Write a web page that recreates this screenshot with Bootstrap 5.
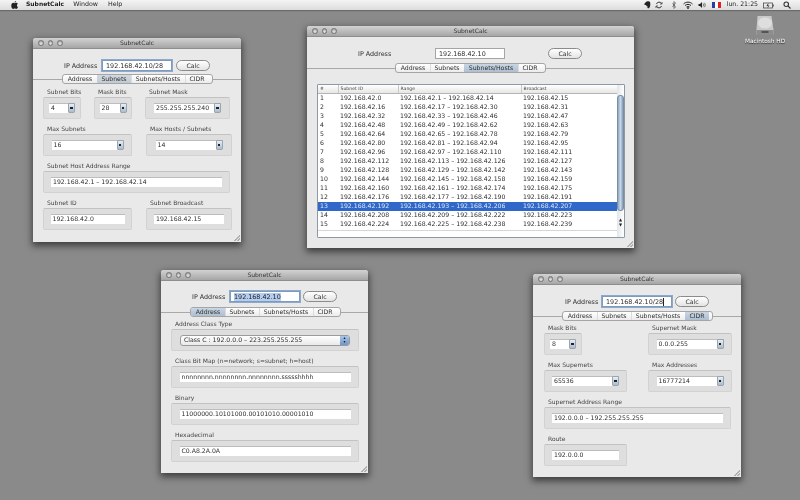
<!doctype html>
<html><head><meta charset="utf-8">
<link href="https://cdn.jsdelivr.net/npm/bootstrap@5.3.0/dist/css/bootstrap.min.css" rel="stylesheet">
<style>
html,body{margin:0;width:800px;height:500px;overflow:hidden;background:#8a8a8a}
.desk{position:relative;width:800px;height:500px;background:#8a8a8a;font-family:"DejaVu Sans",sans-serif;font-size:6.2px;line-height:8px;color:#2e2e2e;text-rendering:geometricPrecision;filter:blur(.3px);overflow:hidden}
.menubar{height:10px;background:linear-gradient(#f4f4f4,#dcdcdc);box-shadow:0 1px 1px #6a6a6a;padding:0 9px 0 11px;font-size:6.3px;line-height:10px;color:#222}
.menubar b{font-size:6px;font-weight:700}
.ml4{margin-left:4px}.ml5{margin-left:5px}.ml6{margin-left:6px}.ml7{margin-left:7px}.ml8{margin-left:8px}.ml9{margin-left:9px}.ml10{margin-left:10px}
.win{position:absolute;background:#e9e9e9;border-radius:3px 3px 0 0;box-shadow:0 3px 7px 1px rgba(0,0,0,.55)}
.w1{left:33px;top:38px;width:208px;height:204px}
.w2{left:307px;top:26px;width:327px;height:222px}
.w3{left:161px;top:270px;width:207px;height:203px}
.w4{left:533px;top:274px;width:208px;height:203px}
.title{height:11px;background:linear-gradient(#d2d2d2,#a6a6a6);border-radius:3px 3px 0 0;border-bottom:1px solid #8e8e8e;line-height:11px;font-size:6px;color:#333;padding:0 5px}
.lights{gap:4px;width:26px}
.lights i{width:5.5px;height:5.5px;border-radius:50%;background:radial-gradient(circle at 50% 70%,#ececec,#8c8c8c);border:.5px solid #777;display:block}
.title span{flex:1;text-align:center;padding-right:26px}
.ip{height:11px;font-size:6.4px}
.ip .lab{width:32px;white-space:nowrap}
.w1 .ip{margin:11px 0 3px 31px;gap:6px}.w1 .calc{margin-left:-2px}
.w2 .ip{margin:11px 0 4px 51px;gap:45px}.w2 .calc{margin-left:-2px}
.w3 .ip{margin:10px 0 5px 31px;gap:6px}.w3 .calc{margin-left:-3px}
.w4 .ip{margin:11px 0 4px 32px;gap:5px}.w4 .calc{margin-left:-2px}
.ipf.form-control{width:70px;height:11px;min-height:0;border-radius:0;padding:0 3px;font-size:6.4px;line-height:10px;color:#2e2e2e;border:1px solid #a5a5a5;background:#fff;white-space:nowrap}
.ipf.focus{box-shadow:0 0 0 1px #8fa9c9;border-color:#7f9ac0}
.ipf mark{background:#b5cdf0;padding:0;color:#222}
.caret{border-right:.6px solid #222}
.calc.btn{width:34px;height:11px;padding:0;font-size:6.2px;line-height:9px;border-radius:6px;color:#333;background:linear-gradient(#fff,#e4e4e4);border:1px solid #8b8b8b}
.tabs{height:10px;background:linear-gradient(#a8a8a8,#a8a8a8) 0 5px/100% 1px no-repeat}
.w1 .tabs{padding-left:29px}.w2 .tabs{padding-left:88px}.w3 .tabs{padding-left:29px}.w4 .tabs{padding-left:29px}
.btn-group.seg{width:151px;height:10px;background:linear-gradient(#fff,#ececec);border:1px solid #a5a5a5;border-radius:3px;overflow:hidden}
.seg .btn{flex:none;padding:0;height:8px;font-size:6.2px;line-height:8px;border:0;border-radius:0;color:#2e2e2e;background:transparent;border-right:1px solid #dcdcdc;white-space:nowrap}
.seg .t1{width:35px}.seg .t2{width:35px}.seg .t3{width:55px}.seg .t4{width:24px;border-right:0}
.seg .btn.on{background:linear-gradient(#c9d6e3,#aebfd0)}
.w1 .seg .btn.on{background:linear-gradient(#d2d9e0,#c0cad4)}
.groups{gap:7px;margin-top:5px}
.w1 .groups,.w3 .groups{padding-left:10px}
.w4 .groups{padding-left:11px}
.w3 .groups,.w4 .groups{margin-top:4px}
.grp .lb{height:8px;line-height:8px;padding-left:4px;font-size:6px;color:#444;white-space:nowrap}
.box{height:22px;background:#dedede;border:1px solid #d2d2d2;border-top-color:#c2c2c2;border-radius:2px;display:flex;align-items:center;justify-content:center}
.g38{width:38px}.g83{width:83px}.g84{width:84px}.g85{width:85px}.g86{width:86px}.g89{width:89px}.g187{width:187px}.g188{width:188px}
.gap13{gap:13px}.gap14{gap:14px}.gap21{gap:21px}.gap66{gap:66px}
.fld{height:10px;background:#fff;border-top:1px solid #bdbdbd;font-size:6.2px;line-height:9px;padding-left:2px;color:#2e2e2e;white-space:nowrap}
.f26{width:26px}.f27{width:27px}.f67{width:67px}.f72{width:72px}.f74{width:74px}.f70{width:70px}.f171{width:171px}
.fld .arr{width:7px;height:10px;margin-left:auto;margin-top:-1px;background:linear-gradient(#e9eef4,#a8bcd0);border:.5px solid #9aa5b0;border-radius:1px;display:flex;align-items:center;justify-content:center}
.arr::after{content:"";width:2.5px;height:2.5px;background:#222}
.pop{width:170px;height:11px;border:1px solid #9b9b9b;border-radius:3px;background:linear-gradient(#fff,#e9e9e9);padding-left:3px;line-height:9px;font-size:6.2px;white-space:nowrap}
.pop .arr2{width:9px;height:9px;margin-left:auto;background:linear-gradient(#a9c4e4,#6f97c9);border-radius:0 2px 2px 0;color:#123;font-size:4px;line-height:4.5px;text-align:center}
.frame{width:308px;height:154px;margin:11px 0 0 10px;border:1px solid #8d9aa5;border-radius:1px;background:#fff}
.clip{height:146px;overflow:hidden;border-bottom:1px solid #d6d6d6}
.grid.table{width:301px;margin:0;table-layout:fixed;font-size:6.2px;line-height:9px;--bs-table-bg:transparent;color:#2e2e2e}
.grid th,.grid td{padding:0 0 0 2px;height:9px;border:0;white-space:nowrap;font-weight:400;color:#2e2e2e;box-shadow:none}
.grid th{height:8px;line-height:7px;font-size:4.6px;background:linear-gradient(#fff,#e6e6e6);border-right:1px solid #c8c8c8;border-bottom:1px solid #b5b5b5;color:#444}
.grid tr.sel td{background:#2f68c8;color:#dfe9f8;--bs-table-accent-bg:transparent}
.c1{width:20px}.c2{width:60px}.c3{width:123px}
.sb{width:7px;background:linear-gradient(90deg,#e2e6ea,#fff)}
.thumb{height:116px;margin-top:10px;background:linear-gradient(90deg,#8ea6bf,#c9d7e5 50%,#7f9ab8);border-radius:3px;border:.5px solid #7a8ea3}
.arrows{font-size:4px;line-height:5px;text-align:center;color:#222;margin-top:6px}
.grip{position:absolute;right:1px;bottom:1px;width:7px;height:7px;background:linear-gradient(135deg,transparent 55%,#b0b0b0 55%,#b0b0b0 65%,transparent 65%,transparent 78%,#b0b0b0 78%,#b0b0b0 88%,transparent 88%)}
.right{color:#222;font-size:6.2px}
.hd{position:absolute;left:742px;top:15px;width:46px;text-align:center;color:#fff;font-size:5.8px;line-height:7px;text-shadow:0 1px 1px #222}
.hd svg{display:block;margin:0 auto 3px}
</style></head><body>
<div class="desk">
<div class="menubar d-flex align-items-center">
<svg width="7" height="8" viewBox="0 0 14 16" class="me-2"><path d="M10 0c0 2-1.500 3.500-3 3.500C7 1.800 8.500.3 10 0zM7 4.500c1 0 2-.9 3.500-.9 1.400 0 2.500.7 3.200 1.800-2.800 1.600-2.300 5.500.3 6.500-.8 2-2.300 4-3.700 4-1.200 0-1.500-.7-3-.7s-1.900.7-3 .7C2.500 15.900.5 12.500.5 9.500.5 6 2.600 3.700 4.600 3.700 5.600 3.700 6.300 4.500 7 4.500z" fill="#222"/></svg>
<b>SubnetCalc</b><span class="ml9">Window</span><span class="ml10">Help</span>
<div class="right ms-auto d-flex align-items-center">
<svg width="7" height="8" viewBox="0 0 14 16"><path d="M1 5l4-4h1c2-1 5-1 6 1 1 3 1 8-1 11-1 2-3 2-4 1-1-2 1-3 1-3-2 0-3-1-4-3H1z" fill="#222"/></svg>
<svg class="ml4" width="8" height="8" viewBox="0 0 16 16" fill="none" stroke="#333" stroke-width="2"><path d="M3 6a5.500 5.500 0 0 1 10-1M13 10a5.500 5.500 0 0 1-10 1"/><path d="M14 2v4h-4M2 14v-4h4" stroke-width="1.500"/></svg>
<svg class="ml9" width="4" height="8" viewBox="0 0 8 16" fill="none" stroke="#444" stroke-width="1.300"><path d="M1 4l6 8-3 3V1l3 3-6 8"/></svg>
<svg class="ml7" width="10" height="8" viewBox="0 0 20 16" fill="none" stroke="#222" stroke-width="2"><path d="M1 6c5-5 13-5 18 0M4 9c3.500-3 8.500-3 12 0M7 12c2-1.500 4-1.500 6 0"/><circle cx="10" cy="14" r="1" fill="#222"/></svg>
<svg class="ml5" width="8" height="8" viewBox="0 0 16 16"><path d="M1 6h3l4-4v12l-4-4H1z" fill="#222"/><path d="M10 5c1.500 1.500 1.500 4.500 0 6M12.500 3.500c2.500 2.500 2.500 6.500 0 9" fill="none" stroke="#333" stroke-width="1.300"/></svg>
<svg class="ml6" width="9" height="6" viewBox="0 0 9 6"><rect width="3" height="6" fill="#2a3f9a"/><rect x="3" width="3" height="6" fill="#fff"/><rect x="6" width="3" height="6" fill="#d22"/></svg>
<span class="text-nowrap ml6">lun. 21:25</span>
<svg class="ml5" width="11" height="7" viewBox="0 0 22 14"><rect x="1" y="2" width="18" height="10" fill="none" stroke="#444" stroke-width="1.500"/><rect x="19.500" y="5" width="2" height="4" fill="#444"/><path d="M10 3l-3 5h3l-1 4 4-5h-3l1-4z" fill="#333"/></svg>
<svg class="ml9" width="8" height="8" viewBox="0 0 16 16" fill="none" stroke="#333" stroke-width="2.200"><circle cx="6.500" cy="6.500" r="4.500"/><path d="M10 10l5 5"/></svg>
</div></div>

<div class="hd"><svg width="22" height="21" viewBox="0 0 21 21"><path d="M3 1h14l2 14v4a1 1 0 0 1-1 1H3a1 1 0 0 1-1-1v-4z" fill="#c9c9c9"/><path d="M2 15h17v4a1 1 0 0 1-1 1H3a1 1 0 0 1-1-1z" fill="#8d8d8d"/><ellipse cx="10.500" cy="8" rx="7" ry="5.500" fill="#dedede"/><rect x="7" y="16" width="7" height="2" fill="#555"/></svg>Macintosh HD</div>

<!-- window 1 -->
<div class="win w1">
<div class="title d-flex align-items-center"><div class="lights d-flex"><i></i><i></i><i></i></div><span>SubnetCalc</span></div>
<div class="ip d-flex align-items-center"><span class="lab">IP Address</span><div class="form-control ipf focus">192.168.42.10/28</div><button class="btn calc">Calc</button></div>
<div class="tabs"><div class="btn-group seg"><button class="btn t1">Address</button><button class="btn t2 on">Subnets</button><button class="btn t3">Subnets/Hosts</button><button class="btn t4">CIDR</button></div></div>
<div class="groups d-flex flex-column">
<div class="d-flex gap13"><div class="grp g38"><div class="lb">Subnet Bits</div><div class="box"><div class="fld f26 d-flex">4<span class="arr"></span></div></div></div>
<div class="grp g38"><div class="lb">Mask Bits</div><div class="box"><div class="fld f27 d-flex">28<span class="arr"></span></div></div></div>
<div class="grp g85"><div class="lb">Subnet Mask</div><div class="box"><div class="fld f67 d-flex">255.255.255.240<span class="arr"></span></div></div></div></div>
<div class="d-flex gap14"><div class="grp g89"><div class="lb">Max Subnets</div><div class="box"><div class="fld f72 d-flex">16<span class="arr"></span></div></div></div>
<div class="grp g86"><div class="lb">Max Hosts / Subnets</div><div class="box"><div class="fld f67 d-flex">14<span class="arr"></span></div></div></div></div>
<div class="grp g187"><div class="lb">Subnet Host Address Range</div><div class="box"><div class="fld f171">192.168.42.1 – 192.168.42.14</div></div></div>
<div class="d-flex gap14"><div class="grp g89"><div class="lb">Subnet ID</div><div class="box"><div class="fld f74">192.168.42.0</div></div></div>
<div class="grp g86"><div class="lb">Subnet Broadcast</div><div class="box"><div class="fld f70">192.168.42.15</div></div></div></div>
</div><div class="grip"></div></div>

<!-- window 2 -->
<div class="win w2">
<div class="title d-flex align-items-center"><div class="lights d-flex"><i></i><i></i><i></i></div><span>SubnetCalc</span></div>
<div class="ip d-flex align-items-center"><span class="lab">IP Address</span><div class="form-control ipf">192.168.42.10</div><button class="btn calc">Calc</button></div>
<div class="tabs"><div class="btn-group seg"><button class="btn t1">Address</button><button class="btn t2">Subnets</button><button class="btn t3 on">Subnets/Hosts</button><button class="btn t4">CIDR</button></div></div>
<div class="frame d-flex"><div class="clip"><table class="table grid">
<thead><tr><th class="c1">#</th><th class="c2">Subnet ID</th><th class="c3">Range</th><th>Broadcast</th></tr></thead><tbody>
<tr><td>1</td><td>192.168.42.0</td><td>192.168.42.1 – 192.168.42.14</td><td>192.168.42.15</td></tr>
<tr><td>2</td><td>192.168.42.16</td><td>192.168.42.17 – 192.168.42.30</td><td>192.168.42.31</td></tr>
<tr><td>3</td><td>192.168.42.32</td><td>192.168.42.33 – 192.168.42.46</td><td>192.168.42.47</td></tr>
<tr><td>4</td><td>192.168.42.48</td><td>192.168.42.49 – 192.168.42.62</td><td>192.168.42.63</td></tr>
<tr><td>5</td><td>192.168.42.64</td><td>192.168.42.65 – 192.168.42.78</td><td>192.168.42.79</td></tr>
<tr><td>6</td><td>192.168.42.80</td><td>192.168.42.81 – 192.168.42.94</td><td>192.168.42.95</td></tr>
<tr><td>7</td><td>192.168.42.96</td><td>192.168.42.97 – 192.168.42.110</td><td>192.168.42.111</td></tr>
<tr><td>8</td><td>192.168.42.112</td><td>192.168.42.113 – 192.168.42.126</td><td>192.168.42.127</td></tr>
<tr><td>9</td><td>192.168.42.128</td><td>192.168.42.129 – 192.168.42.142</td><td>192.168.42.143</td></tr>
<tr><td>10</td><td>192.168.42.144</td><td>192.168.42.145 – 192.168.42.158</td><td>192.168.42.159</td></tr>
<tr><td>11</td><td>192.168.42.160</td><td>192.168.42.161 – 192.168.42.174</td><td>192.168.42.175</td></tr>
<tr><td>12</td><td>192.168.42.176</td><td>192.168.42.177 – 192.168.42.190</td><td>192.168.42.191</td></tr>
<tr class="sel"><td>13</td><td>192.168.42.192</td><td>192.168.42.193 – 192.168.42.206</td><td>192.168.42.207</td></tr>
<tr><td>14</td><td>192.168.42.208</td><td>192.168.42.209 – 192.168.42.222</td><td>192.168.42.223</td></tr>
<tr><td>15</td><td>192.168.42.224</td><td>192.168.42.225 – 192.168.42.238</td><td>192.168.42.239</td></tr>
<tr><td>16</td><td>192.168.42.240</td><td>192.168.42.241 – 192.168.42.254</td><td>192.168.42.255</td></tr>
</tbody></table></div><div class="sb"><div class="thumb"></div><div class="arrows">▲<br>▼</div></div></div>
<div class="grip"></div></div>

<!-- window 3 -->
<div class="win w3">
<div class="title d-flex align-items-center"><div class="lights d-flex"><i></i><i></i><i></i></div><span>SubnetCalc</span></div>
<div class="ip d-flex align-items-center"><span class="lab">IP Address</span><div class="form-control ipf focus"><mark>192.168.42.10</mark></div><button class="btn calc">Calc</button></div>
<div class="tabs"><div class="btn-group seg"><button class="btn t1 on">Address</button><button class="btn t2">Subnets</button><button class="btn t3">Subnets/Hosts</button><button class="btn t4">CIDR</button></div></div>
<div class="groups d-flex flex-column">
<div class="grp g188"><div class="lb">Address Class Type</div><div class="box"><div class="pop d-flex">Class C : 192.0.0.0 – 223.255.255.255<span class="arr2">▴<br>▾</span></div></div></div>
<div class="grp g188"><div class="lb">Class Bit Map (n=network; s=subnet; h=host)</div><div class="box"><div class="fld f171">nnnnnnnn.nnnnnnnn.nnnnnnnn.ssssshhhh</div></div></div>
<div class="grp g188"><div class="lb">Binary</div><div class="box"><div class="fld f171">11000000.10101000.00101010.00001010</div></div></div>
<div class="grp g188"><div class="lb">Hexadecimal</div><div class="box"><div class="fld f171">C0.A8.2A.0A</div></div></div>
</div><div class="grip"></div></div>

<!-- window 4 -->
<div class="win w4">
<div class="title d-flex align-items-center"><div class="lights d-flex"><i></i><i></i><i></i></div><span>SubnetCalc</span></div>
<div class="ip d-flex align-items-center"><span class="lab">IP Address</span><div class="form-control ipf focus"><span class="caret">192.168.42.10/28</span></div><button class="btn calc">Calc</button></div>
<div class="tabs"><div class="btn-group seg"><button class="btn t1">Address</button><button class="btn t2">Subnets</button><button class="btn t3">Subnets/Hosts</button><button class="btn t4 on">CIDR</button></div></div>
<div class="groups d-flex flex-column">
<div class="d-flex gap66"><div class="grp g38"><div class="lb">Mask Bits</div><div class="box"><div class="fld f26 d-flex">8<span class="arr"></span></div></div></div>
<div class="grp g84"><div class="lb">Supernet Mask</div><div class="box"><div class="fld f67 d-flex">0.0.0.255<span class="arr"></span></div></div></div></div>
<div class="d-flex gap21"><div class="grp g83"><div class="lb">Max Supernets</div><div class="box"><div class="fld f67 d-flex">65536<span class="arr"></span></div></div></div>
<div class="grp g84"><div class="lb">Max Addresses</div><div class="box"><div class="fld f67 d-flex">16777214<span class="arr"></span></div></div></div></div>
<div class="grp g187"><div class="lb">Supernet Address Range</div><div class="box"><div class="fld f171">192.0.0.0 – 192.255.255.255</div></div></div>
<div class="grp g83"><div class="lb">Route</div><div class="box"><div class="fld f67">192.0.0.0</div></div></div>
</div><div class="grip"></div></div>
</div>
<script src="https://cdn.jsdelivr.net/npm/bootstrap@5.3.0/dist/js/bootstrap.bundle.min.js"></script>
</body></html>
